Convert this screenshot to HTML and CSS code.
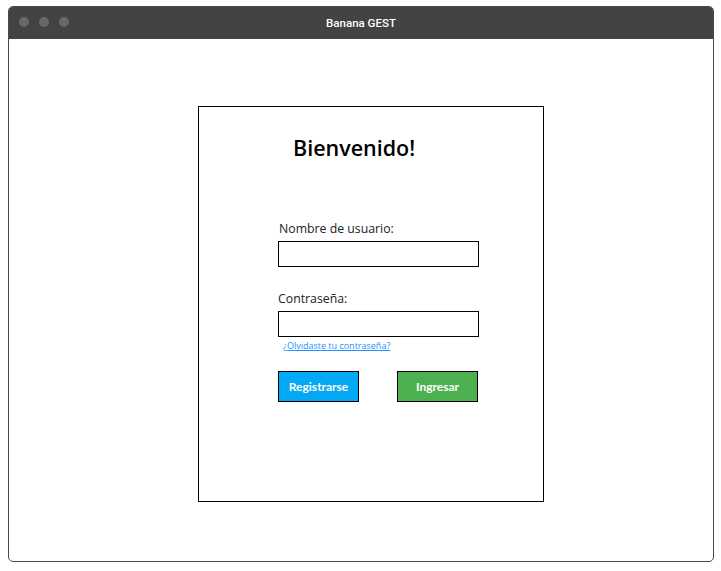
FILE: index.html
```html
<!DOCTYPE html>
<html lang="es">
<head>
<meta charset="utf-8">
<link rel="stylesheet" href="styles.css">
<title>Banana GEST</title>
</head>
<body>
<div class="window">
  <div class="titlebar">
    <div class="dots"><span class="dot"></span><span class="dot"></span><span class="dot"></span></div>
    <div class="title">Banana GEST</div>
  </div>
  <div class="content">
    <div class="card">
      <h1 class="welcome">Bienvenido!</h1>
      <label class="label label-user">Nombre de usuario:</label>
      <div class="input"></div>
      <label class="label label-pass">Contraseña:</label>
      <div class="input"></div>
      <a class="forgot" href="#">¿Olvidaste tu contraseña?</a>
      <div class="buttons">
        <button class="btn btn-register">Registrarse</button>
        <button class="btn btn-login">Ingresar</button>
      </div>
    </div>
  </div>
</div>
</body>
</html>
```
FILE: styles.css
```css
html, body {
  margin: 0;
  padding: 0;
  background: #ffffff;
}
body {
  padding: 6px 0 0 8px;
  font-family: "Open Sans", "Liberation Sans", sans-serif;
}
.window {
  width: 704px;
  height: 554px;
  border: 1px solid #4a4a4a;
  border-radius: 5px;
  overflow: hidden;
  background: #fff;
  display: flex;
  flex-direction: column;
}
.titlebar {
  height: 32px;
  background: #434343;
  position: relative;
  display: flex;
  align-items: center;
  justify-content: center;
  flex: none;
}
.dots {
  position: absolute;
  left: 10px;
  top: 10px;
  display: flex;
  gap: 10px;
}
.dot {
  width: 10px;
  height: 10px;
  border-radius: 50%;
  background: #686868;
}
.title {
  color: #ffffff;
  font-family: Roboto, "Liberation Sans", sans-serif;
  font-size: 11.5px;
  font-weight: 500;
  margin-left: 0px;
}
.content {
  flex: 1;
  padding-top: 67px;
  padding-left: 189px;
}
.card {
  width: 346px;
  height: 396px;
  border: 1px solid #000;
  box-sizing: border-box;
  padding-left: 79px;
  display: flex;
  flex-direction: column;
  align-items: flex-start;
}
.welcome {
  margin: 25px 0 0 15px;
  font-size: 21.5px;
  font-weight: 600;
  color: #000;
  line-height: 32px;
}
.label {
  font-size: 12.3px;
  color: #222;
  line-height: 18px;
}
.label-user {
  margin-top: 56px;
  margin-left: 1px;
}
.label-pass {
  margin-top: 23px;
}
.input {
  margin-top: 3px;
  width: 199px;
  height: 24px;
  border: 1px solid #000;
  background: #fff;
}
.forgot {
  margin: 2px 0 0 5px;
  font-size: 9px;
  color: #1e90ff;
  text-decoration: underline;
  line-height: 14px;
}
.buttons {
  margin-top: 18px;
  display: flex;
  gap: 38px;
}
.btn {
  width: 81px;
  height: 31px;
  border: 1px solid #000;
  color: #fff;
  font-family: Lato, "Liberation Sans", sans-serif;
  font-weight: 700;
  font-size: 12px;
  padding: 0;
}
.btn-register {
  background: #03a9f4;
}
.btn-login {
  background: #4caf50;
}
```
